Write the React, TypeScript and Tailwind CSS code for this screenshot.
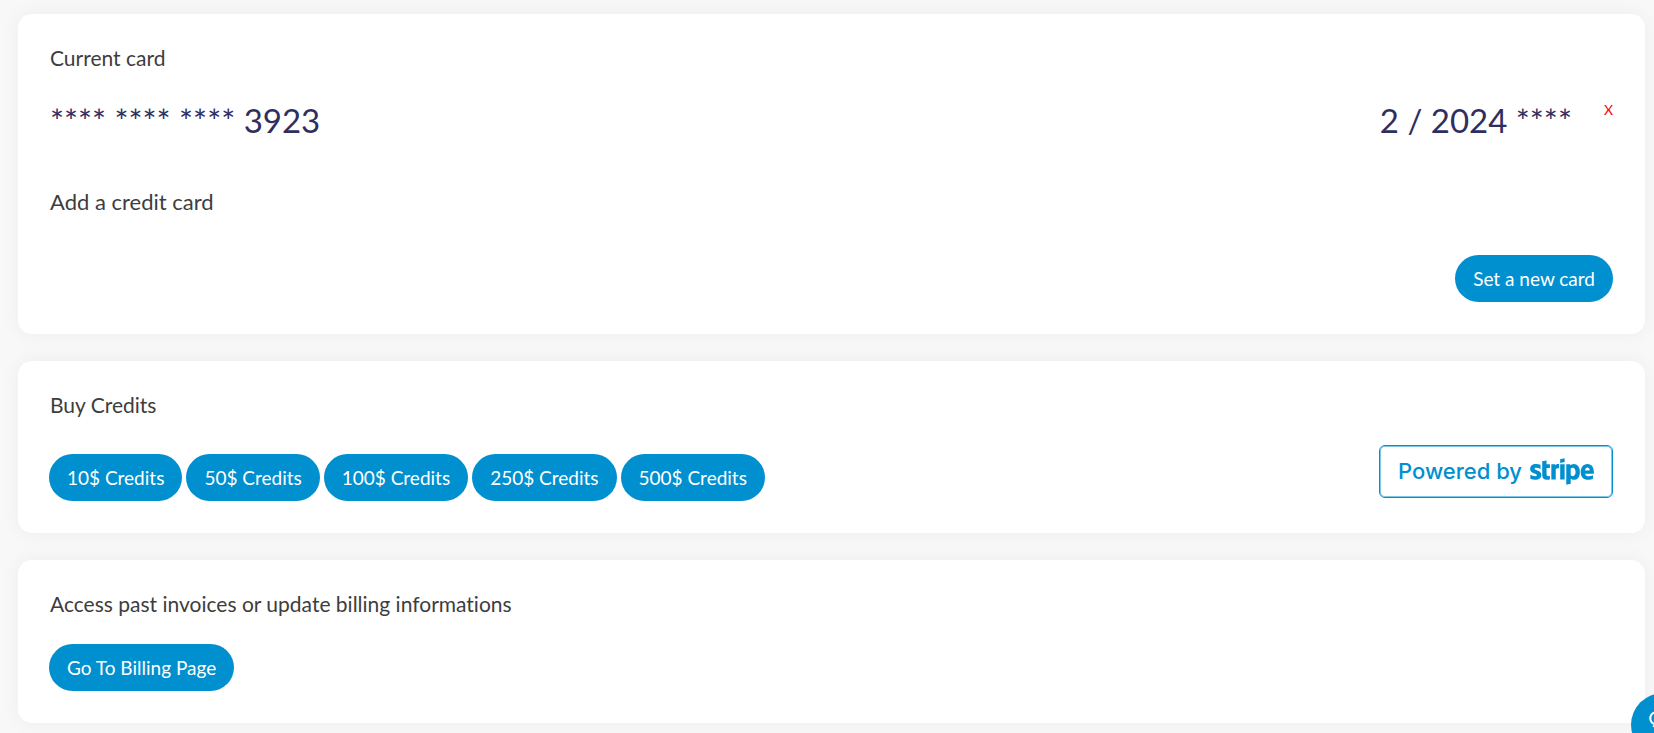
import { ReactNode } from 'react';
import { FaStripe } from 'react-icons/fa';

const creditPacks = [10, 50, 100, 250, 500];

function Card({ children }: { children: ReactNode }) {
  return (
    <section className="rounded-[14px] bg-white p-8 shadow-[0_0_20px_rgba(0,0,0,0.05)]">
      {children}
    </section>
  );
}

function CardTitle({ children }: { children: ReactNode }) {
  return <h2 className="text-[21px] leading-6 text-[#3d3d3d]">{children}</h2>;
}

function PillButton({ children }: { children: ReactNode }) {
  return (
    <button
      type="button"
      className="h-[47px] shrink-0 cursor-pointer rounded-full bg-[#008fcf] px-[18px] pt-0.5 text-[19px] whitespace-nowrap text-white hover:bg-[#007fb8]"
    >
      {children}
    </button>
  );
}

export default function App() {
  return (
    <div className="min-h-screen overflow-x-hidden bg-[#f8f8f8] font-['Lato',sans-serif] [font-variant-ligatures:none]">
      <main className="flex flex-col gap-[27px] pt-3.5 pr-[9px] pb-2.5 pl-[18px]">
        {/* Saved card */}
        <Card>
          <CardTitle>Current card</CardTitle>
          <div className="mt-8 flex items-start text-[33px] leading-9 text-[#2f2e5f]">
            <span>**** **** **** 3923</span>
            <span className="ml-auto">2 / 2024 ****</span>
            <button
              type="button"
              aria-label="Remove card"
              className="ml-8 cursor-pointer text-sm leading-4 text-[#ff0000]"
            >
              X
            </button>
          </div>
          <h3 className="mt-13 text-[22px] leading-6 text-[#3d3d3d]">Add a credit card</h3>
          <div className="mt-[41px] flex justify-end">
            <PillButton>Set a new card</PillButton>
          </div>
        </Card>

        {/* Credits */}
        <Card>
          <CardTitle>Buy Credits</CardTitle>
          <div className="mt-7 flex h-14 justify-between">
            <div className="-ml-px flex items-end gap-1">
              {creditPacks.map((amount) => (
                <PillButton key={amount}>{amount}$ Credits</PillButton>
              ))}
            </div>
            <a
              href="#stripe"
              className="flex h-[53px] items-center gap-2 rounded-md border border-[#008fcf] px-[18px] text-[#008fcf] shadow-[inset_0_0_0_1px_rgba(0,143,207,0.5)]"
            >
              <span className="font-['Inter',sans-serif] text-[22px] font-medium">Powered by</span>
              <FaStripe className="h-[51px] w-16" aria-label="stripe" />
            </a>
          </div>
        </Card>

        {/* Invoices */}
        <Card>
          <CardTitle>Access past invoices or update billing informations</CardTitle>
          <div className="mt-7 -ml-px flex">
            <PillButton>Go To Billing Page</PillButton>
          </div>
        </Card>
      </main>

      {/* Help bubble, partly off the corner */}
      <button
        type="button"
        aria-label="Help"
        className="fixed -right-[41px] -bottom-6 flex size-16 items-center justify-center rounded-full bg-[#008fcf] text-white"
      >
        <svg viewBox="0 0 24 24" className="size-8" fill="none" stroke="currentColor" strokeWidth="1.5">
          <path d="M7 2.5a4.2 4.5 0 1 0 2 8.2" />
          <path d="M4.5 12.5c1 1 3 1.5 5 1.2" />
        </svg>
      </button>
    </div>
  );
}
